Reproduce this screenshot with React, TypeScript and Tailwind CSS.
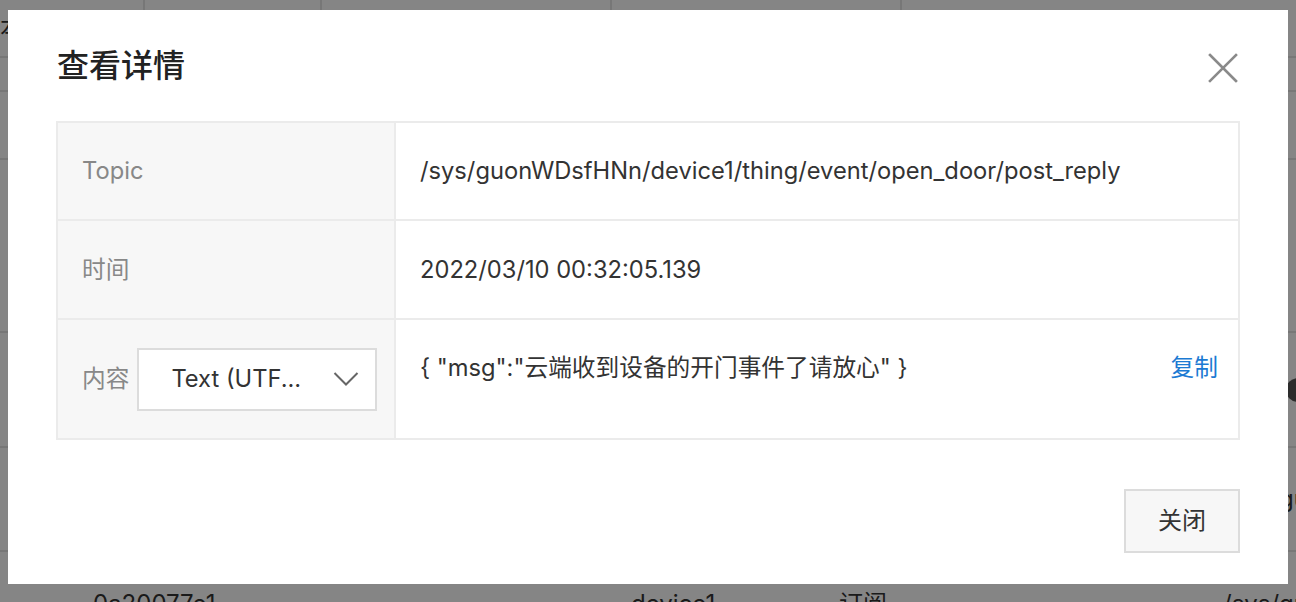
const font = 'font-[Inter,"Noto_Sans_CJK_SC",sans-serif]';

const BackgroundPage = () => (
  <div className="bg-white text-[24px] text-[#333]">
    {/* Tabs */}
    <div className="flex h-[58px] border-b-2 border-[#e5e5e5]">
      {['本地日志', '消息轨迹', '云端运行日志转储', '设备本地日志转储'].map((t, i) => (
        <div
          key={t}
          className={`flex items-center border-r-2 border-[#e5e5e5] ${
            i === 0 ? 'w-[145px] pl-0' : i === 1 ? 'w-[177px] justify-center' : 'w-[290px] justify-center'
          }`}
        >
          {t}
        </div>
      ))}
    </div>
    <div className="h-[34px] border-b-2 border-[#e5e5e5]" />
    <div className="h-[68px] border-b-2 border-[#e5e5e5]" />
    <div className="h-[173px] border-b-2 border-[#e5e5e5]" />
    {/* Table rows (mostly hidden under the dialog) */}
    <div className="flex h-[115px] items-center justify-end border-b-2 border-[#e5e5e5] pr-[-10px]">
      <div className="mr-[-14px] h-[24px] w-[24px] rounded-full bg-[#555]" />
    </div>
    <div className="grid h-[104px] grid-cols-[1223px_1fr] items-center border-b-2 border-[#e5e5e5]">
      <div />
      <div className="whitespace-nowrap overflow-hidden">/sys/guonWDsfHNn</div>
    </div>
    <div className="grid h-[104px] grid-cols-[631px_208px_384px_1fr] items-start border-b-2 border-[#e5e5e5] pt-[34px]">
      <div className="pl-[93px]">0a20077e1</div>
      <div>device1</div>
      <div>订阅</div>
      <div className="whitespace-nowrap overflow-hidden">/sys/guonWDsfHNn</div>
    </div>
  </div>
);

const CloseIcon = () => (
  <svg width="30" height="30" viewBox="0 0 30 30" fill="none" stroke="#8a8a8a" strokeWidth="2.6" strokeLinecap="square">
    <path d="M2 2 L28 28 M28 2 L2 28" />
  </svg>
);

const Chevron = () => (
  <svg width="26" height="16" viewBox="0 0 26 16" fill="none" stroke="#666" strokeWidth="2" strokeLinejoin="miter">
    <path d="M1.5 2 L13 13.5 L24.5 2" />
  </svg>
);

export default function App() {
  return (
    <div className={`relative h-[602px] w-[1296px] overflow-hidden ${font}`}>
      <BackgroundPage />

      {/* Mask */}
      <div className="absolute inset-0 bg-black/[0.48]" />

      {/* Dialog */}
      <div className="absolute left-2 top-[10px] h-[574px] w-[1280px] bg-white pl-[48px] pr-[48px] pt-[34px]">
        <div className="flex items-center justify-between">
          <h2 className="pl-[1px] text-[32px] leading-[44px] font-medium text-[#222]">查看详情</h2>
          <div className="mr-[2px] mt-[4px]">
            <CloseIcon />
          </div>
        </div>

        {/* Detail table */}
        <div className="mt-[33px] border-2 border-[#ebebeb] text-[23.7px]">
          <div className="flex h-[96px]">
            <div className="flex w-[338px] items-center border-r-2 border-[#ebebeb] bg-[#f7f7f7] pl-[24px] text-[#888]">
              Topic
            </div>
            <div className="flex flex-1 items-center pl-[24px] text-[#333]">
              /sys/guonWDsfHNn/device1/thing/event/open_door/post_reply
            </div>
          </div>
          <div className="flex h-[99px] border-t-2 border-[#ebebeb]">
            <div className="flex w-[338px] items-center border-r-2 border-[#ebebeb] bg-[#f7f7f7] pl-[24px] text-[#888]">
              时间
            </div>
            <div className="flex flex-1 items-center pl-[24px] text-[#333]">2022/03/10 00:32:05.139</div>
          </div>
          <div className="flex h-[120px] border-t-2 border-[#ebebeb]">
            <div className="flex w-[338px] items-center gap-[8px] border-r-2 border-[#ebebeb] bg-[#f7f7f7] pl-[24px] text-[#888]">
              <span>内容</span>
              <div className="flex h-[63px] w-[240px] items-center justify-between border-2 border-[#dcdcdc] bg-white pl-[32px] pr-[16px] text-[#333]">
                <span>Text (UTF...</span>
                <Chevron />
              </div>
            </div>
            <div className="flex flex-1 items-start justify-between pl-[24px] pr-[20px] pt-[32px] leading-[32px] text-[#333]">
              <span>{'{ "msg":"云端收到设备的开门事件了请放心" }'}</span>
              <span className="text-[#1b7ad3]">复制</span>
            </div>
          </div>
        </div>

        {/* Footer */}
        <div className="mt-[49px] flex justify-end">
          <button className="h-[64px] w-[116px] border-2 border-[#dcdcdc] bg-[#f7f7f7] text-[24px] text-[#333]">
            关闭
          </button>
        </div>
      </div>
    </div>
  );
}
